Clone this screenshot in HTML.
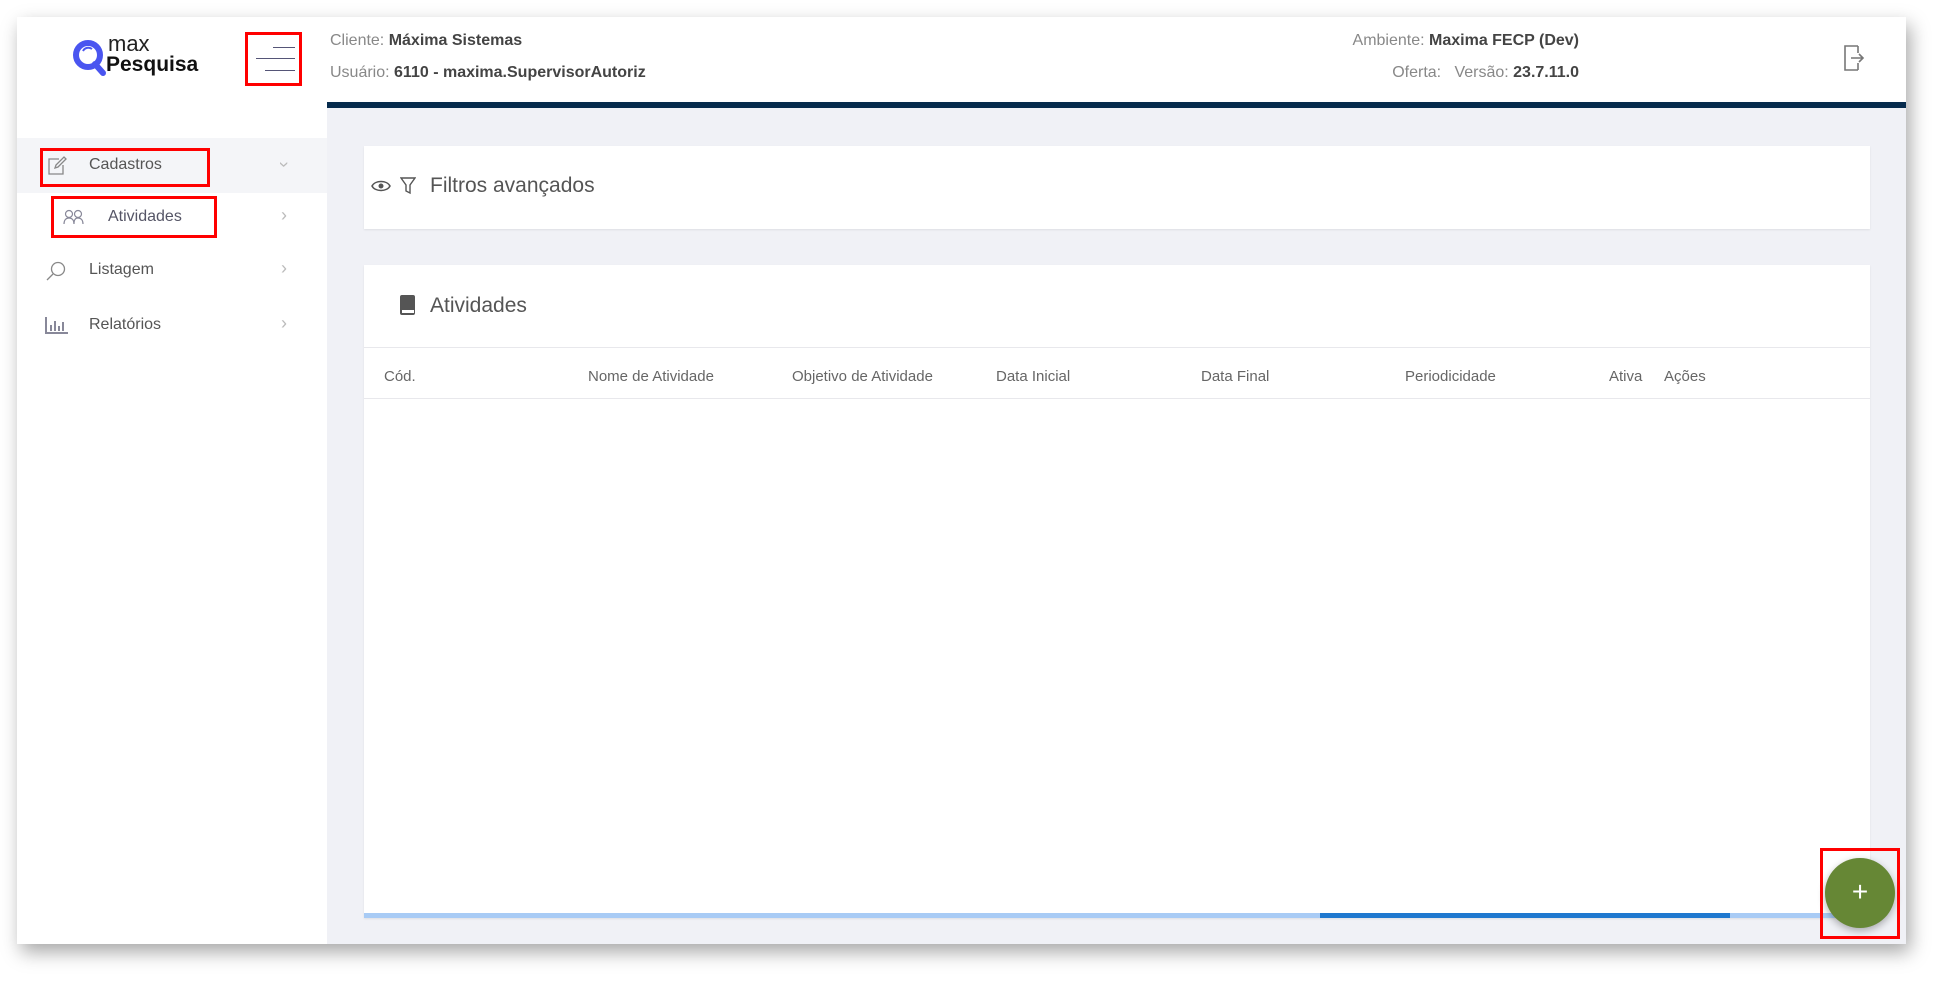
<!DOCTYPE html>
<html><head><meta charset="utf-8"><style>
*{margin:0;padding:0;box-sizing:border-box}
body{width:1953px;height:993px;background:#fff;font-family:"Liberation Sans",sans-serif;position:relative;overflow:hidden;color:#555}
.frame{position:absolute;left:17px;top:17px;width:1889px;height:927px;background:#f0f1f6;box-shadow:4px 8px 18px rgba(0,0,0,.35)}
.abs{position:absolute}
.hdr{left:0;top:0;width:1889px;height:85px;background:#fff}
.bar{left:310px;top:85px;width:1579px;height:6px;background:#062b4d}
.side{left:0;top:85px;width:310px;height:842px;background:#fff}
.t{position:absolute;white-space:nowrap}
.red{position:absolute;border:3px solid #f00}
.card{position:absolute;background:#fff;box-shadow:0 1px 2px rgba(0,0,0,.08)}
.col{position:absolute;top:351px;font-size:15px;color:#666}
.chev{position:absolute;left:264px;color:#bbb;font-size:18px}
</style></head><body>
<div class="frame">
 <div class="abs hdr"></div>
 <div class="abs side"></div>
 <div class="abs bar"></div>
 <svg class="abs" style="left:54px;top:20px" width="36" height="40" viewBox="0 0 36 40"><circle cx="17" cy="18" r="12" fill="none" stroke="#4a55f0" stroke-width="6"/><path d="M24 27 L32 36" stroke="#4a55f0" stroke-width="6" stroke-linecap="round"/><path d="M12 14 a6 6 0 0 1 9 -2" stroke="#4a55f0" stroke-width="2" fill="none"/></svg>
 <div class="t" style="left:91px;top:14px;font-size:22px;color:#222">max</div>
 <div class="t" style="left:89px;top:36px;font-size:21px;font-weight:bold;color:#111">Pesquisa</div>
 <div class="red" style="left:228px;top:15px;width:57px;height:54px"></div>
 <div class="abs" style="left:256px;top:30px;width:22px;height:1px;background:#557"></div>
 <div class="abs" style="left:239px;top:41px;width:39px;height:1px;background:#557"></div>
 <div class="abs" style="left:248px;top:53px;width:30px;height:1px;background:#557"></div>
 <div class="t" style="left:313px;top:15px;font-size:16px;color:#888">Cliente: <b style="color:#444">Máxima Sistemas</b></div>
 <div class="t" style="left:313px;top:47px;font-size:16px;color:#888">Usuário: <b style="color:#444">6110 - maxima.SupervisorAutoriz</b></div>
 <div class="t" style="right:327px;top:15px;font-size:16px;color:#888">Ambiente: <b style="color:#444">Maxima FECP (Dev)</b></div>
 <div class="t" style="right:327px;top:47px;font-size:16px;color:#888">Oferta: &nbsp;&nbsp;Versão: <b style="color:#444">23.7.11.0</b></div>
 <svg class="abs" style="left:1826px;top:28px" width="22" height="26" viewBox="0 0 22 26"><path d="M15 1H2v24h13M15 8V1M15 18v7M8 13h12M16 9l4 4-4 4" fill="none" stroke="#777" stroke-width="1.6"/></svg>
 <div class="abs" style="left:0;top:121px;width:310px;height:55px;background:#f4f5f8"></div>
 <div class="red" style="left:23px;top:131px;width:170px;height:39px"></div>
 <svg class="abs" style="left:30px;top:139px" width="20" height="20" viewBox="0 0 20 20"><path d="M12 3H2v15h14V9M8 12l1-3 8-8 2 2-8 8z" fill="none" stroke="#888" stroke-width="1.3"/></svg>
 <div class="t" style="left:72px;top:139px;font-size:16px;color:#555">Cadastros</div>
 <div class="chev" style="top:137px;transform:rotate(90deg)">›</div>
 <div class="red" style="left:34px;top:179px;width:166px;height:42px"></div>
 <svg class="abs" style="left:46px;top:192px" width="22" height="16" viewBox="0 0 22 16"><circle cx="6" cy="5" r="3.5" fill="#fff" stroke="#889" stroke-width="1.2"/><circle cx="15" cy="5" r="3.5" fill="#fff" stroke="#889" stroke-width="1.2"/><path d="M1 15c0-4 2-6 5-6s5 2 5 6M11 15c0-4 1-6 4-6s5 2 5 6" fill="#fff" stroke="#889" stroke-width="1.2"/></svg>
 <div class="t" style="left:91px;top:191px;font-size:16px;color:#556">Atividades</div>
 <div class="chev" style="top:188px">›</div>
 <svg class="abs" style="left:28px;top:243px" width="22" height="22" viewBox="0 0 22 22"><circle cx="13" cy="9" r="6.5" fill="none" stroke="#888" stroke-width="1.3"/><path d="M8 14l-6 6" stroke="#888" stroke-width="1.3"/></svg>
 <div class="t" style="left:72px;top:244px;font-size:16px;color:#555">Listagem</div>
 <div class="chev" style="top:241px">›</div>
 <svg class="abs" style="left:28px;top:299px" width="24" height="18" viewBox="0 0 24 18"><path d="M1 1v16h22" fill="none" stroke="#889" stroke-width="2"/><path d="M6 9v6M10 5v10M14 10v5M18 6v9" stroke="#889" stroke-width="2"/></svg>
 <div class="t" style="left:72px;top:299px;font-size:16px;color:#555">Relatórios</div>
 <div class="chev" style="top:296px">›</div>
 <div class="card" style="left:347px;top:129px;width:1506px;height:83px"></div>
 <svg class="abs" style="left:354px;top:163px" width="20" height="12" viewBox="0 0 20 12"><path d="M1 6c3-6 15-6 18 0c-3 6-15 6-18 0z" fill="none" stroke="#555" stroke-width="1.5"/><circle cx="10" cy="6" r="2.5" fill="#555"/></svg>
 <svg class="abs" style="left:383px;top:160px" width="16" height="18" viewBox="0 0 16 18"><path d="M1 1h14l-5 7v8l-4-2V8z" fill="none" stroke="#555" stroke-width="1.4"/></svg>
 <div class="t" style="left:413px;top:157px;font-size:21px;color:#555">Filtros avançados</div>
 <div class="card" style="left:347px;top:248px;width:1506px;height:653px"></div>
 <div class="abs" style="left:347px;top:330px;width:1506px;height:1px;background:#e8e8ec"></div>
 <div class="abs" style="left:347px;top:381px;width:1506px;height:1px;background:#e8e8ec"></div>
 <svg class="abs" style="left:382px;top:278px" width="16" height="20" viewBox="0 0 16 20"><rect x="1" y="0" width="15" height="20" rx="2" fill="#555"/><rect x="3" y="15" width="12" height="3" fill="#fff"/></svg>
 <div class="t" style="left:413px;top:277px;font-size:21px;color:#555">Atividades</div>
 <div class="col" style="left:367px">Cód.</div>
 <div class="col" style="left:571px">Nome de Atividade</div>
 <div class="col" style="left:775px">Objetivo de Atividade</div>
 <div class="col" style="left:979px">Data Inicial</div>
 <div class="col" style="left:1184px">Data Final</div>
 <div class="col" style="left:1388px">Periodicidade</div>
 <div class="col" style="left:1592px">Ativa</div>
 <div class="col" style="left:1647px">Ações</div>
 <div class="abs" style="left:347px;top:896px;width:1506px;height:5px;background:#a8cbf5"></div>
 <div class="abs" style="left:1303px;top:896px;width:410px;height:5px;background:#1f78cf"></div>
 <div class="abs" style="left:1808px;top:841px;width:70px;height:70px;border-radius:50%;background:#668735;box-shadow:0 3px 8px rgba(0,0,0,.3);color:#fff;font-size:28px;text-align:center;line-height:68px">+</div>
 <div class="red" style="left:1803px;top:831px;width:80px;height:91px"></div>
</div>
</body></html>
